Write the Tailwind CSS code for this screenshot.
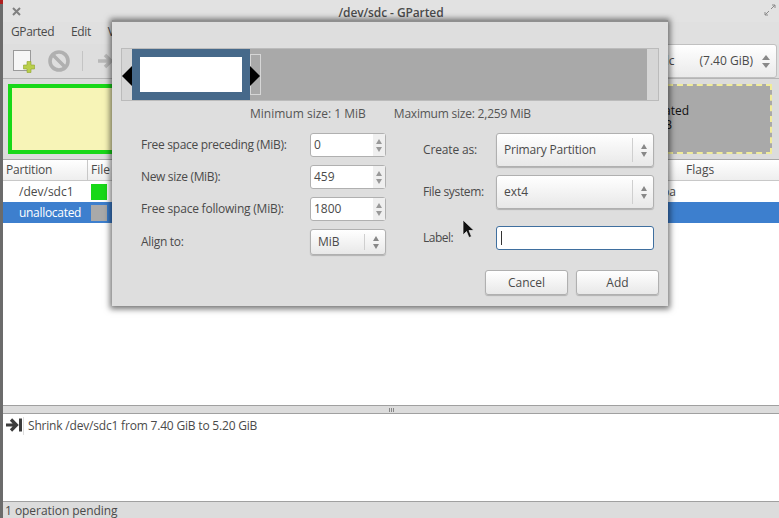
<!DOCTYPE html>
<html lang="en">
<head>
<meta charset="UTF-8">
<title>/dev/sdc - GParted</title>
<script src="https://cdn.jsdelivr.net/npm/@tailwindcss/browser@4"></script>
</head>
<body class="bg-[#6b6b6b]">
<div class="relative w-[779px] h-[518px] overflow-hidden pl-[3px] font-['Open_Sans',sans-serif] text-[12px] text-[#4a4a4a]">
  <div class="absolute left-0 top-0 w-[3px] h-[4px] bg-[#b02020]"></div>
  <!-- Main window -->
  <div class="flex flex-col h-full bg-[#dcdcdc]">
    <div class="relative h-[22px] flex items-center justify-center pt-[3px] bg-[#e2e2e2] font-semibold text-[#4c4c4c] tracking-[-0.1px]">
      <svg class="absolute left-[9px] top-[7px]" width="9" height="9" viewBox="0 0 9 9" fill="none" stroke="#808080" stroke-width="2"><path d="M1 1l7 7M8 1l-7 7"/></svg>
      <span>/dev/sdc - GParted</span>
      <svg class="absolute right-[3px] top-[4px]" width="12" height="12" viewBox="0 0 12 12" fill="none" stroke="#8a8a8a"><path d="M7 5l4-4M8 1h3v3M5 7l-4 4M1 8v3h3"/></svg>
    </div>
    <div class="h-[22px] flex items-center gap-[17px] pl-[8px] pb-[3px] bg-[#e0e0e0] tracking-[-0.4px]">
      <span>GParted</span><span>Edit</span><span>View</span>
    </div>
    <div class="h-[35px] flex items-center pl-[10px] bg-[#dedede] border-b border-[#b5b5b5]">
      <svg width="24" height="24" viewBox="0 0 24 24"><rect x="0.5" y="1.5" width="17" height="20" fill="#f6f6f6" stroke="#9a9a9a"/><path d="M14 12.5h4v3.5h3.5v4h-3.5v3.5h-4v-3.5h-3.5v-4h3.5z" fill="#b9cf4a" stroke="#8ea32e" stroke-width=".6"/></svg>
      <svg class="ml-[10px]" width="24" height="24" viewBox="0 0 24 24" fill="none" stroke="#b0b0b0" stroke-width="3.6"><circle cx="12" cy="12" r="9"/><path d="M6 6l12 12"/></svg>
      <div class="ml-[11px] w-px h-[20px] bg-[#c4c4c4]"></div>
      <svg class="ml-[15px]" width="16" height="16" viewBox="0 0 16 16" fill="none" stroke="#b8b8b8" stroke-width="3.5"><path d="M0 8h12M7 2l6 6-6 6"/></svg>
      <div class="ml-auto mr-[2px] w-[300px] h-[34px] flex items-center justify-end bg-gradient-to-b from-white to-[#eaeaea] border border-[#c0c0c0] rounded-[3px] pr-[6px] text-[#4a4a4a]">
        <span class="mr-[25px]">/dev/sdc</span>
        <span class="mr-[9px]">(7.40 GiB)</span>
        <div class="flex flex-col gap-[3px]"><div class="w-0 h-0 border-x-[4px] border-x-transparent border-b-[5px] border-b-[#888]"></div><div class="w-0 h-0 border-x-[4px] border-x-transparent border-t-[5px] border-t-[#888]"></div></div>
      </div>
    </div>
    <div class="h-[80px] flex gap-[3px] pt-[5px] pb-[5px] pl-[5px] pr-[7px] bg-[#dcdcdc]">
      <div class="w-[300px] border-[4px] border-[#18d818] bg-[#f7f4b7]"></div>
      <div class="flex-1 border-[2px] border-dashed border-[#f0ec9a] bg-[#a9a9a9] flex flex-col justify-center items-end pr-[81px] pb-[3px] text-[12px] leading-[14px] text-[#111]">
        <span>unallocated</span><span class="mr-[17px]">2.20 GiB</span>
      </div>
    </div>
    <div class="flex-1 flex flex-col bg-white border-t border-[#a8a8a8]">
      <div class="h-[21px] flex items-center bg-gradient-to-b from-white to-[#eeeeee] border-b border-[#c8c8c8]">
        <div class="w-[85px] pl-[3px] border-r border-[#c8c8c8] h-full flex items-center tracking-[-0.2px]">Partition</div>
        <div class="pl-[3px]">File system</div>
        <div class="ml-auto w-[93px]">Flags</div>
      </div>
      <div class="h-[21px] flex items-center">
        <div class="w-[85px] pl-[16px]">/dev/sdc1</div>
        <div class="w-[16px] h-[16px] ml-[3px] bg-[#18d818]"></div>
        <div class="ml-auto mr-[103px]">boot, lba</div>
      </div>
      <div class="h-[21px] flex items-center bg-[#3d7fce] text-white">
        <div class="w-[85px] pl-[16px] tracking-[-0.3px]">unallocated</div>
        <div class="w-[16px] h-[16px] ml-[3px] bg-[#a9a9a9]"></div>
      </div>
      <div class="flex-1"></div>
    </div>
    <div class="h-[9px] bg-[#dcdcdc] border-y border-[#a0a0a0] flex justify-center items-center gap-px">
      <i class="w-px h-[4px] bg-[#888]"></i><i class="w-px h-[4px] bg-[#888]"></i><i class="w-px h-[4px] bg-[#888]"></i>
    </div>
    <div class="h-[87px] bg-white flex items-start pt-[3px] pl-[3px]">
      <svg width="17" height="16" viewBox="0 0 17 16" fill="none" stroke="#3c3c3c" stroke-width="3.2"><path d="M0 8h10M5 2.5l5.5 5.5-5.5 5.5"/><path d="M14.5 1.5v13" stroke-width="3"/></svg>
      <div class="w-px h-[18px] bg-[#dddddd]"></div>
      <span class="ml-[4px] tracking-[-0.19px]">Shrink /dev/sdc1 from 7.40 GiB to 5.20 GiB</span>
    </div>
    <div class="h-[17px] bg-[#dcdcdc] border-t border-[#a0a0a0] flex items-center pl-[2px] pt-[1px] tracking-[-0.05px]">1 operation pending</div>
  </div>

  <!-- Add partition dialog -->
  <div class="absolute left-[112px] top-[20px] w-[556px] h-[286px] flex flex-col bg-[#dedede] border-t-2 border-[#8f8f8f] shadow-[0_1px_6px_2px_rgba(0,0,0,0.55)] px-[9px]">
    <div class="relative mt-[26px] h-[53px] border border-[#bbbbbb] bg-[#d6d6d6] pl-[10px] pr-[11px]">
      <div class="h-full bg-[#a9a9a9] flex">
        <div class="w-[118px] h-full border-[8px] border-[#46698a] bg-white"></div>
        <div class="w-[11px] h-[41px] mt-[5px] border border-[#d6d6d6]"></div>
      </div>
      <div class="absolute left-[0px] top-[17px] w-0 h-0 border-y-[10px] border-y-transparent border-r-[10px] border-r-black"></div>
      <div class="absolute left-[128px] top-[17px] w-0 h-0 border-y-[10px] border-y-transparent border-l-[10px] border-l-black"></div>
    </div>
    <div class="mt-[4px] h-[18px] flex items-center gap-[28px] pl-[129px] text-[#555]">
      <span>Minimum size: 1 MiB</span><span class="tracking-[-0.22px]">Maximum size: 2,259 MiB</span>
    </div>
    <div class="mt-[10px] flex">
      <div class="w-[273px] pl-[20px] flex flex-col gap-[8px]">
        <div class="h-[24px] flex items-center justify-between pr-[8px]">
          <span class="tracking-[-0.3px]">Free space preceding (MiB):</span>
          <div class="w-[76px] h-[24px] flex items-center pl-[3px] bg-white border border-[#b0b0b0] rounded-[3px] relative"><span>0</span>
            <div class="absolute right-0 inset-y-0 w-[12px] bg-[#efefef] flex flex-col justify-center items-center gap-[3px]"><i class="w-0 h-0 border-x-[3px] border-x-transparent border-b-[5px] border-b-[#999]"></i><i class="w-0 h-0 border-x-[3px] border-x-transparent border-t-[5px] border-t-[#999]"></i></div></div>
        </div>
        <div class="h-[24px] flex items-center justify-between pr-[8px]">
          <span class="tracking-[-0.33px]">New size (MiB):</span>
          <div class="w-[76px] h-[24px] flex items-center pl-[3px] bg-white border border-[#b0b0b0] rounded-[3px] relative"><span>459</span>
            <div class="absolute right-0 inset-y-0 w-[12px] bg-[#efefef] flex flex-col justify-center items-center gap-[3px]"><i class="w-0 h-0 border-x-[3px] border-x-transparent border-b-[5px] border-b-[#999]"></i><i class="w-0 h-0 border-x-[3px] border-x-transparent border-t-[5px] border-t-[#999]"></i></div></div>
        </div>
        <div class="h-[24px] flex items-center justify-between pr-[8px]">
          <span class="tracking-[-0.22px]">Free space following (MiB):</span>
          <div class="w-[76px] h-[24px] flex items-center pl-[3px] bg-white border border-[#b0b0b0] rounded-[3px] relative"><span>1800</span>
            <div class="absolute right-0 inset-y-0 w-[12px] bg-[#efefef] flex flex-col justify-center items-center gap-[3px]"><i class="w-0 h-0 border-x-[3px] border-x-transparent border-b-[5px] border-b-[#999]"></i><i class="w-0 h-0 border-x-[3px] border-x-transparent border-t-[5px] border-t-[#999]"></i></div></div>
        </div>
        <div class="h-[26px] flex items-center justify-between pr-[8px]">
          <span class="tracking-[-0.3px]">Align to:</span>
          <div class="w-[76px] h-[26px] flex items-center pl-[7px] bg-gradient-to-b from-white to-[#e8e8e8] border border-[#b0b0b0] rounded-[3px] relative shadow-[0_1px_1px_rgba(0,0,0,0.2)]"><span>MiB</span>
            <div class="absolute right-[20px] top-[4px] bottom-[4px] w-px bg-[#cfcfcf]"></div>
            <div class="absolute right-[6px] inset-y-0 flex flex-col justify-center items-center gap-[3px]"><i class="w-0 h-0 border-x-[3px] border-x-transparent border-b-[5px] border-b-[#888]"></i><i class="w-0 h-0 border-x-[3px] border-x-transparent border-t-[5px] border-t-[#888]"></i></div></div>
        </div>
      </div>
      <div class="flex-1 flex flex-col pr-[5px]">
        <div class="h-[34px] flex items-center justify-between pl-[29px]">
          <span class="tracking-[-0.15px]">Create as:</span>
          <div class="w-[158px] h-[34px] flex items-center pl-[7px] bg-gradient-to-b from-white to-[#e8e8e8] border border-[#b0b0b0] rounded-[3px] relative shadow-[0_1px_1px_rgba(0,0,0,0.2)]"><span class="tracking-[-0.18px]">Primary Partition</span>
            <div class="absolute right-[20px] top-[4px] bottom-[4px] w-px bg-[#cfcfcf]"></div>
            <div class="absolute right-[6px] inset-y-0 flex flex-col justify-center items-center gap-[3px]"><i class="w-0 h-0 border-x-[3px] border-x-transparent border-b-[5px] border-b-[#888]"></i><i class="w-0 h-0 border-x-[3px] border-x-transparent border-t-[5px] border-t-[#888]"></i></div></div>
        </div>
        <div class="mt-[8px] h-[34px] flex items-center justify-between pl-[29px]">
          <span class="tracking-[-0.33px]">File system:</span>
          <div class="w-[158px] h-[34px] flex items-center pl-[7px] bg-gradient-to-b from-white to-[#e8e8e8] border border-[#b0b0b0] rounded-[3px] relative shadow-[0_1px_1px_rgba(0,0,0,0.2)]"><span>ext4</span>
            <div class="absolute right-[20px] top-[4px] bottom-[4px] w-px bg-[#cfcfcf]"></div>
            <div class="absolute right-[6px] inset-y-0 flex flex-col justify-center items-center gap-[3px]"><i class="w-0 h-0 border-x-[3px] border-x-transparent border-b-[5px] border-b-[#888]"></i><i class="w-0 h-0 border-x-[3px] border-x-transparent border-t-[5px] border-t-[#888]"></i></div></div>
        </div>
        <div class="mt-[17px] h-[24px] flex items-center justify-between pl-[29px]">
          <span class="tracking-[-0.5px]">Label:</span>
          <div class="w-[158px] h-[24px] flex items-center pl-[4px] bg-white border border-[#3f6f9f] rounded-[3px]"><i class="w-px h-[14px] bg-[#333]"></i></div>
        </div>
      </div>
    </div>
    <div class="mt-[15px] flex justify-end gap-[8px]">
      <button class="w-[83px] h-[25px] bg-gradient-to-b from-white to-[#e8e8e8] border border-[#b0b0b0] rounded-[3px] shadow-[0_1px_1px_rgba(0,0,0,0.2)]">Cancel</button>
      <button class="w-[83px] h-[25px] bg-gradient-to-b from-white to-[#e8e8e8] border border-[#b0b0b0] rounded-[3px] shadow-[0_1px_1px_rgba(0,0,0,0.2)]">Add</button>
    </div>
  </div>

  <!-- Mouse pointer -->
  <svg class="absolute left-[462px] top-[219px]" width="13" height="20" viewBox="0 0 13 20"><path d="M1 1v15l3.5-3.5 2.5 6 2.5-1-2.5-6h5z" fill="#111" stroke="#eee" stroke-width=".7"/></svg>
</div>
</body>
</html>
